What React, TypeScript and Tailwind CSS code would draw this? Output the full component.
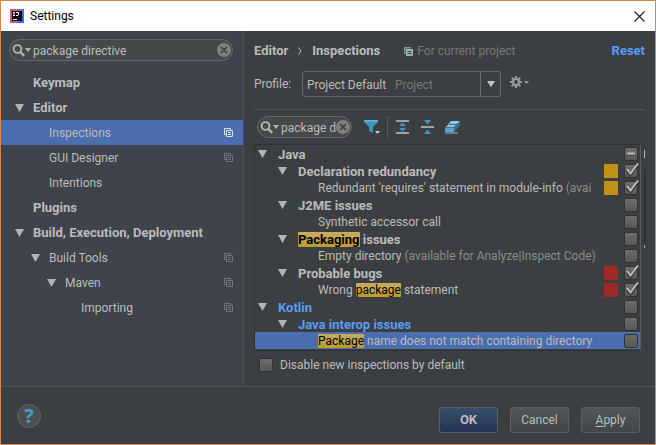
import React, { useState } from "react";

type IconProps = { className?: string };

function Triangle({ className = "" }: IconProps) {
  return (
    <svg viewBox="0 0 9 8" className={`h-2 w-[9px] shrink-0 ${className}`} aria-hidden="true">
      <path d="M0 0h9L4.5 8z" fill="#b4b4b4" />
    </svg>
  );
}

function CopyIcon({ className = "" }: IconProps) {
  return (
    <svg viewBox="0 0 9 9" className={`h-[9px] w-[9px] shrink-0 ${className}`} fill="none" stroke="currentColor" aria-hidden="true">
      <path d="M2 6.500H.5V.5h6V2" />
      <path d="M2.500 2.500h6v6h-6z" />
      <path d="M4 4.500h3M4 6.500h3" />
    </svg>
  );
}

function ProjectIcon() {
  return (
    <svg viewBox="0 0 9 9" className="ml-6 mr-1 h-[9px] w-[9px] shrink-0" aria-hidden="true">
      <path d="M0 0h7v1.500H1.500V7H0z" fill="#6f9cb4" />
      <path d="M2 2h7v7H2z" fill="#a8adb0" />
      <path d="M3.500 4.500h4M3.500 6.500h4" stroke="#3c3f41" />
    </svg>
  );
}

function SearchIcon() {
  return (
    <svg viewBox="0 0 19 13" className="h-[13px] w-[19px] shrink-0" aria-hidden="true">
      <circle cx="5.500" cy="5" r="3.900" fill="none" stroke="#b4b4b4" strokeWidth="1.900" />
      <path d="M8.200 7.800l4 4" stroke="#b4b4b4" strokeWidth="2.400" />
      <path d="M13 4h6l-3 4z" fill="#b4b4b4" />
    </svg>
  );
}

function ClearIcon() {
  return (
    <svg viewBox="0 0 14 14" className="h-[14px] w-[14px]" aria-hidden="true">
      <circle cx="7" cy="7" r="7" fill="#808080" />
      <path d="M4 4l6 6M10 4l-6 6" stroke="#3c3f41" strokeWidth="1.700" />
    </svg>
  );
}

function SearchBox({ label, initial, className }: { label: string; initial: string; className: string }) {
  const [value, setValue] = useState(initial);
  return (
    <div className={`flex items-center rounded-full border border-[#676767] bg-[#45494a] pl-[2px] ${className}`}>
      <SearchIcon />
      <input
        type="text"
        aria-label={label}
        value={value}
        onChange={(e) => setValue(e.target.value)}
        className="ml-0.5 h-5 min-w-0 flex-1 bg-transparent pt-0.5 text-[#bbbbbb] outline-none"
      />
      <button type="button" aria-label="Clear" onClick={() => setValue("")} className="mr-px shrink-0">
        <ClearIcon />
      </button>
    </div>
  );
}

type NavItem = { name: string; pad: string; open?: boolean; bold?: boolean; copy?: boolean; selected?: boolean };

const navItems: NavItem[] = [
  { name: "Keymap", pad: "pl-[14px]", bold: true },
  { name: "Editor", pad: "pl-[14px]", bold: true, open: true },
  { name: "Inspections", pad: "pl-[30px]", copy: true, selected: true },
  { name: "GUI Designer", pad: "pl-[30px]", copy: true },
  { name: "Intentions", pad: "pl-[30px]" },
  { name: "Plugins", pad: "pl-[14px]", bold: true },
  { name: "Build, Execution, Deployment", pad: "pl-[14px]", bold: true, open: true },
  { name: "Build Tools", pad: "pl-[30px]", open: true, copy: true },
  { name: "Maven", pad: "pl-[46px]", open: true, copy: true },
  { name: "Importing", pad: "pl-[62px]", copy: true },
];

function Sidebar() {
  return (
    <nav aria-label="Settings categories" className="w-[243px] shrink-0 border-r border-[#515151] bg-[#3e434c]">
      <div className="px-2 pb-[9px] pt-2">
        <SearchBox label="Search settings" initial="package directive" className="h-[22px] w-[224px]" />
      </div>
      <ul>
        {navItems.map((item) => (
          <li
            key={item.name}
            className={`flex h-[25px] items-center pr-[10px] ${item.pad} ${item.selected ? "bg-[#4b6eaf]" : ""} ${item.bold ? "text-[13px] font-bold" : ""}`}
          >
            <span className="flex w-[18px] shrink-0">{item.open && <Triangle />}</span>
            <span className="flex-1 whitespace-nowrap">{item.name}</span>
            {item.copy && <CopyIcon className={item.selected ? "text-[#d5e2f0]" : "text-[#6e7780]"} />}
          </li>
        ))}
      </ul>
    </nav>
  );
}

type CheckState = "on" | "off" | "mixed";

function CheckBox({ state, label, id }: { state: CheckState; label: string; id?: string }) {
  const [current, setCurrent] = useState<CheckState>(state);
  return (
    <span className="relative flex shrink-0">
      <input
        id={id}
        type="checkbox"
        aria-label={id ? undefined : label}
        checked={current === "on"}
        onChange={(e) => setCurrent(e.target.checked ? "on" : "off")}
        className="h-[14px] w-[14px] appearance-none rounded-xs border border-[#2f3233] bg-linear-to-b from-[#6d6d6d] to-[#575757]"
      />
      {current !== "off" && (
        <svg viewBox="0 0 16 16" className="pointer-events-none absolute -top-0.5 left-0 h-4 w-4" fill="none" aria-hidden="true">
          {current === "on" ? (
            <>
              <path d="M3 8.500l3.500 4.500L14 3" stroke="#2b2b2b" strokeWidth="2.200" />
              <path d="M3 7l3.500 4.500L14 1.500" stroke="#bcbcbc" strokeWidth="2" />
            </>
          ) : (
            <>
              <path d="M3 10h8" stroke="#3a3a3a" />
              <path d="M3 8.500h8" stroke="#bcbcbc" strokeWidth="2" />
            </>
          )}
        </svg>
      )}
    </span>
  );
}

function Mark({ children }: { children: React.ReactNode }) {
  return (
    <mark className="rounded-xs bg-linear-to-b from-[#c9ab62] to-[#bd9b30] text-black">{children}</mark>
  );
}

type Row = {
  key: string;
  text: React.ReactNode;
  level: 0 | 1 | 2;
  state: CheckState;
  tone?: string;
  swatch?: string;
  selected?: boolean;
};

const rows: Row[] = [
  { key: "Java", text: "Java", level: 0, state: "mixed" },
  { key: "Declaration redundancy", text: "Declaration redundancy", level: 1, state: "on", swatch: "bg-[#be9117]" },
  {
    key: "Redundant requires",
    text: <>Redundant 'requires' statement in module-info <span className="text-[#8c8c8c]">(avai</span></>,
    level: 2,
    state: "on",
    swatch: "bg-[#be9117]",
  },
  { key: "J2ME issues", text: "J2ME issues", level: 1, state: "off" },
  { key: "Synthetic accessor call", text: "Synthetic accessor call", level: 2, state: "off" },
  { key: "Packaging issues", text: <><Mark>Packaging</Mark> issues</>, level: 1, state: "off" },
  {
    key: "Empty directory",
    text: <>Empty directory <span className="text-[#8c8c8c]">(available for Analyze|Inspect Code)</span></>,
    level: 2,
    state: "off",
  },
  { key: "Probable bugs", text: "Probable bugs", level: 1, state: "on", swatch: "bg-[#9e2927]" },
  { key: "Wrong package statement", text: <>Wrong <Mark>package</Mark> statement</>, level: 2, state: "on", swatch: "bg-[#9e2927]" },
  { key: "Kotlin", text: "Kotlin", level: 0, state: "off", tone: "text-[#589df6]" },
  { key: "Java interop issues", text: "Java interop issues", level: 1, state: "off", tone: "text-[#589df6]" },
  {
    key: "Package name mismatch",
    text: <><Mark>Package</Mark> name does not match containing directory</>,
    level: 2,
    state: "off",
    selected: true,
  },
];

const levelPad = ["pl-[3px]", "pl-[23px]", "pl-[43px]"];

function InspectionTree() {
  return (
    <ul className="min-w-0 flex-1 border border-[#2f3233] border-r-[#5a5d5e] pb-px">
      {rows.map((row) => (
        <li
          key={row.key}
          className={`flex h-[17px] items-center pr-0.5 ${levelPad[row.level]} ${row.selected ? "bg-[#4b6eaf]" : ""} ${row.tone ?? ""}`}
        >
          <span className="flex w-5 shrink-0">{row.level < 2 && <Triangle />}</span>
          <span className={`min-w-0 flex-1 whitespace-nowrap pt-0.5 leading-[17px] ${row.level < 2 ? "text-[13px] font-bold" : ""}`}>
            {row.text}
          </span>
          {row.swatch && <span className={`mr-[6px] h-[14px] w-[14px] shrink-0 ${row.swatch}`} />}
          <CheckBox state={row.state} label={row.key} />
        </li>
      ))}
    </ul>
  );
}

function Toolbar() {
  return (
    <div className="flex items-center pl-[3px] pt-[6px]">
      <SearchBox label="Filter inspections" initial="package d" className="h-[22px] w-[95px]" />
      <button type="button" aria-label="Filter" className="ml-[12px]">
        <svg viewBox="0 0 17 16" className="h-4 w-[17px]">
          <path d="M0 1h14v2L9 8v6l-4-2V8L0 3z" fill="#3e93bd" />
          <path d="M0 1h14v1.500H0z" fill="#62b5dc" />
          <path d="M11 12h5l-2.500 3z" fill="#d0d0d0" />
        </svg>
      </button>
      <span className="ml-[6px] h-5 border-l border-dotted border-[#6a6d6e]" />
      <button type="button" aria-label="Expand all" className="ml-2">
        <svg viewBox="0 0 13 14" className="h-[14px] w-[13px]">
          <path d="M0 0h13v2H0zM0 12h13v2H0z" fill="#a0a3a5" />
          <path d="M6.500 2.500L10 6H3zM6.500 11.500L3 8h7z" fill="#3e94c9" />
        </svg>
      </button>
      <button type="button" aria-label="Collapse all" className="ml-3">
        <svg viewBox="0 0 13 14" className="h-[14px] w-[13px]">
          <path d="M0 6h13v2H0z" fill="#a0a3a5" />
          <path d="M3 0h7L6.500 4.500zM6.500 9.500L10 14H3z" fill="#3e94c9" />
        </svg>
      </button>
      <button type="button" aria-label="Reset to empty" className="ml-[11px]">
        <svg viewBox="0 0 16 14" className="h-[14px] w-4">
          <path d="M6 1h9L9 7H1z" fill="#8cc4de" />
          <path d="M0 7.500h9V12H0z" fill="#5ba3c7" />
          <path d="M9 7.500L15 1v4l-6 7z" fill="#2f7396" />
          <path d="M4 4.500h8" stroke="#3c6f8a" />
          <path d="M0 13h13" stroke="#b0b4b6" />
        </svg>
      </button>
    </div>
  );
}

function ProfileRow() {
  return (
    <div className="flex items-center">
      <label htmlFor="profile" className="w-12 shrink-0">Profile:</label>
      <div className="relative flex h-[26px] w-[199px] rounded-[3px] border border-[#676a6b]">
        <select id="profile" className="w-full appearance-none bg-transparent pl-1 pt-px text-[#bbbbbb] outline-none">
          <option>Project Default</option>
        </select>
        <span className="pointer-events-none absolute inset-y-0 left-[92px] flex items-center pt-px text-[#787878]">Project</span>
        <span className="pointer-events-none absolute inset-y-0 right-0 flex w-5 items-center justify-center border-l border-[#676a6b]">
          <svg viewBox="0 0 8 6" className="h-[6px] w-2"><path d="M0 0h8L4 6z" fill="#c4c4c4" /></svg>
        </span>
      </div>
      <button type="button" aria-label="Profile actions" className="mb-1 ml-[9px]">
        <svg viewBox="0 0 19 12" className="h-3 w-[19px]">
          <g stroke="#999999" strokeWidth="2.200">
            <path d="M6 0v12M0 6h12M1.800 1.800l8.400 8.400M10.200 1.800l-8.400 8.400" />
          </g>
          <circle cx="6" cy="6" r="4.200" fill="#999999" />
          <circle cx="6" cy="6" r="1.900" fill="#3c3f41" />
          <path d="M14 5h5l-2.500 3z" fill="#999999" />
        </svg>
      </button>
    </div>
  );
}

function MainPanel() {
  return (
    <main className="min-w-0 flex-1 pl-[10px]">
      <header className="mr-[10px] flex h-10 items-center">
        <span className="text-[13px] font-bold">Editor</span>
        <svg viewBox="0 0 4 8" className="mx-[10px] h-2 w-1" fill="none" stroke="#bbbbbb"><path d="M.5.5l2.500 3.500L.5 7.500" /></svg>
        <h1 className="text-[13px] font-bold">Inspections</h1>
        <ProjectIcon />
        <span className="text-[#787878]">For current project</span>
        <a href="#reset" className="ml-auto text-[13px] font-bold text-[#589df6]">Reset</a>
      </header>
      <ProfileRow />
      <hr className="mr-[10px] mt-3 border-[#555759]" />
      <Toolbar />
      <div className="mt-[6px] flex">
        <InspectionTree />
        <div className="flex w-[14px] flex-col pl-[3px]" aria-hidden="true">
          <span className="mt-[6px] h-2 w-px bg-[#a5c4bb]" />
          <span className="mt-3 h-[75px] w-0.5 bg-[#2f3233]" />
          <span className="h-[3px] w-px bg-[#a0a0a0]" />
        </div>
      </div>
      <div className="flex h-[28px] items-center gap-[7px] pl-[5px]">
        <CheckBox id="disable-new" state="off" label="Disable new inspections by default" />
        <label htmlFor="disable-new">Disable new inspections by default</label>
      </div>
    </main>
  );
}

const buttonBase = "h-[26px] w-[59px] rounded-[3px] border border-[#5e6060]";

export default function App() {
  return (
    <div className="flex min-h-screen flex-col border border-[#d9834a] bg-[#3c3f41] font-[Roboto,'Noto_Sans_CJK_KR',sans-serif] text-[12px] leading-5 text-[#bbbbbb]">
      <div className="flex h-[30px] items-center bg-white pl-[9px] pr-[10px] text-black">
        <svg viewBox="0 0 14 14" className="h-[14px] w-[14px]" aria-hidden="true">
          <defs>
            <linearGradient id="logo" x1="0" x2="1" y1="0" y2="0.300">
              <stop offset="0" stopColor="#f0475c" />
              <stop offset="0.500" stopColor="#b25cc0" />
              <stop offset="1" stopColor="#2278f0" />
            </linearGradient>
          </defs>
          <path d="M0 0h14v14H0z" fill="url(#logo)" />
          <path d="M2 2h10v10H2z" fill="#0a0a0a" />
          <path d="M3 3.500h2M4 3.500v3M3 6.500h2M6 3.500h2.500v2.500l-.5.500H6M3 10.500h4" stroke="#ffffff" fill="none" />
        </svg>
        <span className="ml-[6px] flex-1">Settings</span>
        <button type="button" aria-label="Close">
          <svg viewBox="0 0 11 11" className="h-[11px] w-[11px]" stroke="#222222" strokeWidth="1.200"><path d="M.5.5l10 10M10.500.5l-10 10" /></svg>
        </button>
      </div>
      <div className="flex flex-1">
        <Sidebar />
        <MainPanel />
      </div>
      <footer className="flex h-[58px] items-center gap-3 border-t border-[#515151] pl-4 pr-[15px]">
        <button type="button" aria-label="Help" className="mr-auto h-6 w-6 rounded-full border border-[#616364] bg-[#4c5052] font-['Open_Sans',sans-serif] text-xl font-bold leading-5 text-[#4a9cc9]">
          ?
        </button>
        <button type="button" className={`${buttonBase} mt-2 bg-linear-to-b from-[#365071] to-[#243450] text-[13px] font-bold`}>OK</button>
        <button type="button" className={`${buttonBase} mt-2 bg-linear-to-b from-[#515658] to-[#414648]`}>Cancel</button>
        <button type="button" className={`${buttonBase} mt-2 bg-linear-to-b from-[#515658] to-[#414648]`}><span className="underline underline-offset-2">A</span>pply</button>
      </footer>
    </div>
  );
}
